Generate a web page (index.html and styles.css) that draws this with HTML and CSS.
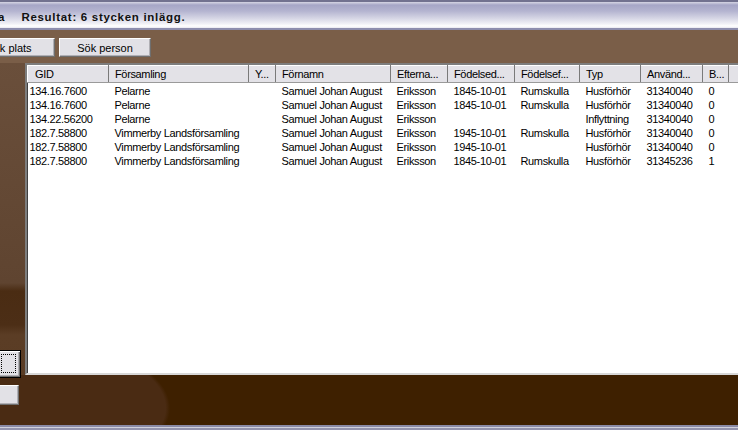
FILE: index.html
```html
<!DOCTYPE html>
<html lang="sv">
<head>
<meta charset="utf-8">
<title>Resultat</title>
<link rel="stylesheet" href="styles.css">
</head>
<body>
<div class="window">
  <div class="titlebar">
    <span class="cut">a</span>
    <span class="title">Resultat: 6 stycken inlägg.</span>
  </div>
  <div class="toolbar">
    <button class="btn btn-place">Sök plats</button>
    <button class="btn btn-person">Sök person</button>
  </div>
  <div class="main">
    <div class="side">
      <button class="sbtn sbtn-focus"><span class="focus"></span></button>
      <button class="sbtn sbtn-plain"></button>
    </div>
    <div class="listwrap">
      <div class="list">
        <table class="grid">
          <colgroup>
            <col style="width:81px"><col style="width:140px"><col style="width:27px"><col style="width:115px"><col style="width:57px"><col style="width:67px"><col style="width:65px"><col style="width:61px"><col style="width:62px"><col style="width:26px"><col style="width:40px">
          </colgroup>
          <thead>
            <tr>
              <th class="first">GID</th><th>Församling</th><th>Y...</th><th>Förnamn</th><th>Efterna...</th><th>Födelsed...</th><th>Födelsef...</th><th>Typ</th><th>Använd...</th><th>B...</th><th></th>
            </tr>
          </thead>
          <tbody>
            <tr><td class="first">134.16.7600</td><td>Pelarne</td><td></td><td>Samuel Johan August</td><td>Eriksson</td><td>1845-10-01</td><td>Rumskulla</td><td>Husförhör</td><td>31340040</td><td>0</td><td></td></tr>
            <tr><td class="first">134.16.7600</td><td>Pelarne</td><td></td><td>Samuel Johan August</td><td>Eriksson</td><td>1845-10-01</td><td>Rumskulla</td><td>Husförhör</td><td>31340040</td><td>0</td><td></td></tr>
            <tr><td class="first">134.22.56200</td><td>Pelarne</td><td></td><td>Samuel Johan August</td><td>Eriksson</td><td></td><td></td><td>Inflyttning</td><td>31340040</td><td>0</td><td></td></tr>
            <tr><td class="first">182.7.58800</td><td>Vimmerby Landsförsamling</td><td></td><td>Samuel Johan August</td><td>Eriksson</td><td>1945-10-01</td><td>Rumskulla</td><td>Husförhör</td><td>31340040</td><td>0</td><td></td></tr>
            <tr><td class="first">182.7.58800</td><td>Vimmerby Landsförsamling</td><td></td><td>Samuel Johan August</td><td>Eriksson</td><td>1945-10-01</td><td></td><td>Husförhör</td><td>31340040</td><td>0</td><td></td></tr>
            <tr><td class="first">182.7.58800</td><td>Vimmerby Landsförsamling</td><td></td><td>Samuel Johan August</td><td>Eriksson</td><td>1845-10-01</td><td>Rumskulla</td><td>Husförhör</td><td>31345236</td><td>1</td><td></td></tr>
          </tbody>
        </table>
      </div>
    </div>
  </div>
  <div class="bottombar"></div>
</div>
</body>
</html>
```

FILE: styles.css
```css
html, body {
  margin: 0;
  padding: 0;
}
body {
  width: 738px;
  height: 430px;
  overflow: hidden;
  background: #3e2000;
  font-family: "Liberation Sans", Arial, sans-serif;
}
.window {
  width: 738px;
  height: 430px;
  display: flex;
  flex-direction: column;
  overflow: hidden;
}
.titlebar {
  height: 23px;
  flex: none;
  border-top: 2px solid #72728f;
  border-bottom: 2px solid #8e8eae;
  background: linear-gradient(#d6d6e4 0px, #a6a6c6 3px, #b4b4d0 9px, #d4d4e4 16px, #f2f2f7 22px, #ffffff 24px, #e8e8f0 26px);
  display: flex;
  align-items: center;
  gap: 17px;
  padding-top: 3px;
  box-sizing: content-box;
}
.cut {
  margin-left: -2px;
  font-size: 11.5px;
  font-weight: bold;
  color: #111;
}
.title {
  font-size: 11.5px;
  font-weight: bold;
  letter-spacing: 0.7px;
  color: #111;
}
.toolbar {
  height: 33px;
  flex: none;
  background: #7a5e48;
  display: flex;
  align-items: flex-start;
  gap: 4px;
  padding-top: 8px;
  box-sizing: border-box;
}
.btn {
  height: 19px;
  width: 92px;
  margin: 0;
  padding: 0;
  font-family: "Liberation Sans", Arial, sans-serif;
  font-size: 11px;
  color: #000;
  background: #e2e1e6;
  border: 1px solid;
  border-color: #ffffff #6f6f6f #6f6f6f #ffffff;
  box-shadow: inset -1px -1px 0 #b0afb4;
}
.btn-place {
  margin-left: -37px;
}
.main {
  flex: 1;
  display: flex;
  background:
    radial-gradient(ellipse 150px 70px at 20px 345px, #4a2b13 0, #4a2b13 97%, rgba(74, 43, 19, 0) 100%);
  background-color: #3e2000;
}
.side {
  width: 25px;
  flex: none;
  display: flex;
  flex-direction: column;
  align-items: flex-start;
  padding-top: 287px;
  box-sizing: border-box;
  background: linear-gradient(#6a4f3b 0, #5f4430 220px, #4a2c13 228px, #4c2e16 262px, #5b3d25 272px, #5a3c24 312px, rgba(74, 43, 19, 0) 312px);
}
.sbtn {
  margin: 0;
  padding: 0;
  background: #e2e1e6;
}
.sbtn-focus {
  width: 24px;
  height: 28px;
  margin-left: -3px;
  border: 1px solid #000;
  box-shadow: inset 1px 1px 0 #fff, inset -1px -1px 0 #6f6f6f, inset -2px -2px 0 #b0afb4;
  position: relative;
}
.focus {
  position: absolute;
  left: 3px;
  top: 3px;
  right: 4px;
  bottom: 4px;
  border: 1px dotted #000;
}
.sbtn-plain {
  width: 22px;
  height: 20px;
  margin-left: -3px;
  margin-top: 7px;
  border: 1px solid;
  border-color: #ffffff #6f6f6f #6f6f6f #ffffff;
  box-shadow: inset -1px -1px 0 #b0afb4;
}
.listwrap {
  flex: 1;
  min-width: 0;
}
.list {
  width: 740px;
  height: 312px;
  box-sizing: border-box;
  background: #fff;
  border: 2px solid;
  border-color: #7d7d7d #d8d8d8 #d8d8d8 #7d7d7d;
  box-shadow: inset 1px 1px 0 #404040;
  overflow: hidden;
}
.grid {
  border-collapse: collapse;
  table-layout: fixed;
  width: 741px;
  font-size: 11px;
  letter-spacing: -0.35px;
  color: #000;
}
.grid th {
  height: 17px;
  padding: 0 0 0 6px;
  box-sizing: border-box;
  font-weight: normal;
  text-align: left;
  background: #e3e2e7;
  border-top: 1px solid #ffffff;
  border-left: 1px solid #ffffff;
  border-right: 1px solid #7a7a7a;
  border-bottom: 1px solid #9a9a9a;
  white-space: nowrap;
  overflow: hidden;
}
.grid th.first {
  padding-left: 7px;
}
.grid tbody tr:first-child td {
  padding-top: 1px;
  height: 15px;
}
.grid td {
  height: 14px;
  padding: 0 0 0 6px;
  box-sizing: border-box;
  white-space: nowrap;
  overflow: hidden;
  line-height: 14px;
}
.grid td.first {
  padding-left: 2px;
}
.bottombar {
  height: 5px;
  flex: none;
  background: linear-gradient(#8a8aa6 0, #8a8aa6 2px, #d0d0dc 2px, #d0d0dc 3px, #9494ae 3px);
}
```
